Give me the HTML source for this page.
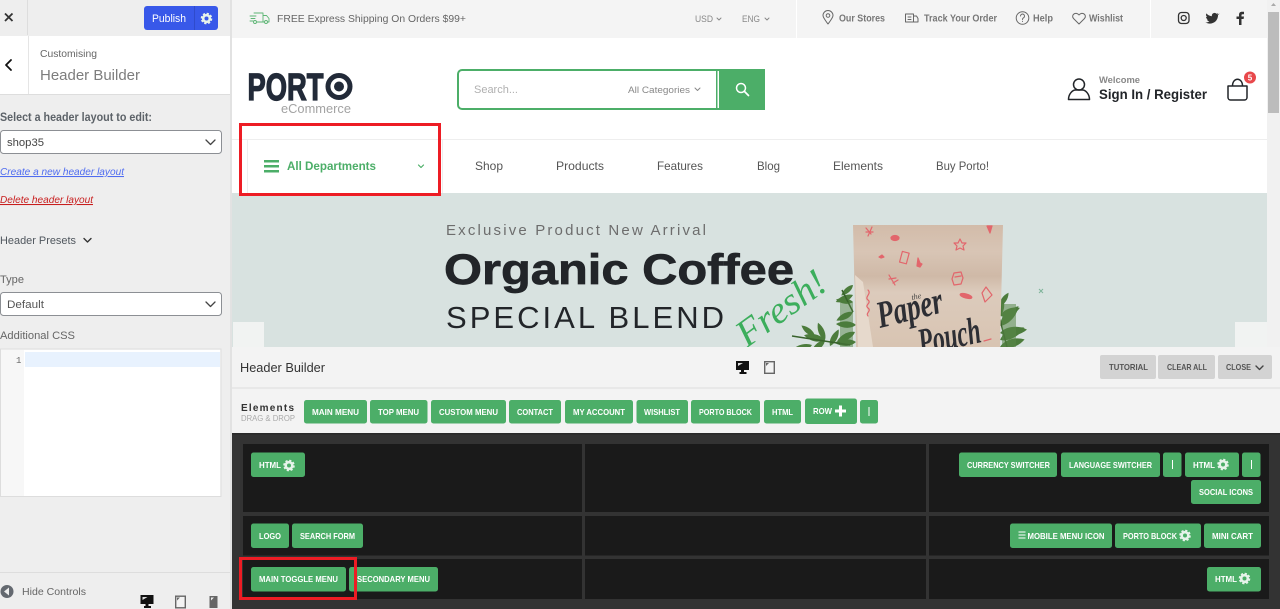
<!DOCTYPE html>
<html lang="en">
<head>
<meta charset="utf-8">
<title>Header Builder</title>
<style>
html,body{margin:0;padding:0;width:1280px;height:609px;overflow:hidden;background:#fff}
svg{display:block}
text{font-family:"Liberation Sans",sans-serif;white-space:pre}
.b{font-weight:700}
.bt{font-size:8.5px;font-weight:700;fill:#fff}
.gt{font-size:8.5px;font-weight:700;fill:#555}
.g{fill:#4cae68}
.nav{font-size:12px;fill:#555}
.top{font-size:10px;fill:#777;font-weight:700}
.ln{fill:none;stroke-linecap:round;stroke-linejoin:round}
</style>
</head>
<body>
<svg xmlns="http://www.w3.org/2000/svg" width="1280" height="609" viewBox="0 0 1280 609">
<defs>
<symbol id="gear" viewBox="-6 -6 12 12" overflow="visible">
<circle r="3.3" fill="none" stroke="#e6f3ea" stroke-width="2.6"/>
<circle r="4.9" fill="none" stroke="#e6f3ea" stroke-width="1.8" stroke-dasharray="2.2 1.65"/>
</symbol>
<symbol id="desk" viewBox="0 0 13 13">
<path d="M0 0h13v9H0z" fill="#111"/><path d="M2 2h5L2 5z" fill="#ddd"/><path d="M5 9h3v2h2.500v2h-7v-2H5z" fill="#111"/>
</symbol>
<symbol id="tab" viewBox="0 0 11 13">
<rect x=".7" y=".7" width="9.600" height="11.600" fill="#f3f3f3" stroke="#666" stroke-width="1.400"/><path d="M2 2h3L2 5z" fill="#666"/>
</symbol>
<linearGradient id="bag" x1="0" y1="0" x2="0" y2="1">
<stop offset="0" stop-color="#d2bba9"/><stop offset=".22" stop-color="#d8c5b5"/><stop offset=".42" stop-color="#cfb9a7"/><stop offset=".55" stop-color="#dccbbc"/><stop offset="1" stop-color="#d8c4b2"/>
</linearGradient>
<path id="leaf" d="M0 0C3-4 9-5 14-3 10 1 4 2 0 0z"/>
</defs>

<!-- left sidebar -->
<rect width="232" height="609" fill="#eee"/>
<rect x="230" width="2" height="609" fill="#e2e2e2"/>
<rect x="27" width="1" height="35" fill="#ddd"/>
<path d="M5 13.500l7.500 7.500M12.500 13.500L5 21" stroke="#333" stroke-width="1.800" fill="none"/>
<rect x="144" y="6" width="74" height="24" rx="3" fill="#3858e9"/>
<rect x="194" y="6" width="1" height="24" fill="#2f4bcb"/>
<text x="152" y="22" font-size="11" fill="#fff" textLength="34" lengthAdjust="spacingAndGlyphs">Publish</text>
<use href="#gear" x="200.500" y="12.500" width="12" height="12"/>
<rect y="36" width="230" height="58" fill="#fff"/>
<rect y="94" width="230" height="1" fill="#ddd"/>
<rect x="28" y="36" width="1" height="58" fill="#e5e5e5"/>
<path d="M11 60l-5 5 5 5" class="ln" stroke="#111" stroke-width="1.800"/>
<text x="40" y="57" font-size="10.500" fill="#666" textLength="57" lengthAdjust="spacingAndGlyphs">Customising</text>
<text x="40" y="80" font-size="15" fill="#7d7d7d" textLength="100" lengthAdjust="spacingAndGlyphs">Header Builder</text>
<text x="0" y="121" font-size="11.500" font-weight="700" fill="#5c6268" textLength="152" lengthAdjust="spacingAndGlyphs">Select a header layout to edit:</text>
<rect x=".5" y="130.500" width="221" height="23" rx="3" fill="#fff" stroke="#8c8f94"/>
<text x="7" y="146" font-size="11" fill="#444" textLength="37" lengthAdjust="spacingAndGlyphs">shop35</text>
<path d="M206 140l4.500 4.500 4.500-4.500" class="ln" stroke="#444" stroke-width="1.300"/>
<text x="0" y="175" font-size="10.500" font-style="italic" fill="#4f6cf0" text-decoration="underline" textLength="124" lengthAdjust="spacingAndGlyphs">Create a new header layout</text>
<text x="0" y="203" font-size="10.500" font-style="italic" fill="#c81e1e" text-decoration="underline" textLength="93" lengthAdjust="spacingAndGlyphs">Delete header layout</text>
<text x="0" y="244" font-size="11" fill="#50575e" textLength="76" lengthAdjust="spacingAndGlyphs">Header Presets</text>
<path d="M84 238.500l3.500 3.500 3.500-3.500" class="ln" stroke="#333" stroke-width="1.400"/>
<text x="0" y="283" font-size="11" fill="#666" textLength="24" lengthAdjust="spacingAndGlyphs">Type</text>
<rect x=".5" y="292.500" width="221" height="23" rx="3" fill="#fff" stroke="#8c8f94"/>
<text x="7" y="308" font-size="11" fill="#555" textLength="37" lengthAdjust="spacingAndGlyphs">Default</text>
<path d="M206 302l4.500 4.500 4.500-4.500" class="ln" stroke="#444" stroke-width="1.300"/>
<text x="0" y="339" font-size="11" fill="#666" textLength="75" lengthAdjust="spacingAndGlyphs">Additional CSS</text>
<rect x=".5" y="349" width="220.500" height="147.500" fill="#f7f7f7" stroke="#ddd"/>
<rect x="24" y="350" width="196" height="146" fill="#fff"/>
<rect x="25" y="352" width="195" height="15" fill="#e8f2fe"/>
<text x="16" y="363" font-size="9" fill="#666" style="font-family:'Liberation Mono',monospace">1</text>
<rect y="572" width="230" height="1" fill="#ddd"/>
<circle cx="7" cy="591.500" r="6.500" fill="#646970"/>
<path d="M9 587.500v8l-5-4z" fill="#eee"/>
<text x="22" y="595" font-size="10.500" fill="#666" textLength="64" lengthAdjust="spacingAndGlyphs">Hide Controls</text>
<use href="#desk" x="140.500" y="595" width="13" height="13"/>
<use href="#tab" x="175" y="595.500" width="11" height="13"/>
<rect x="209.500" y="596" width="8" height="12" fill="#666"/><path d="M211 597.500h3l-3 3z" fill="#eee"/>

<!-- top bar -->
<rect x="232" width="1035" height="38" fill="#f4f4f4"/>
<rect x="796" width="1" height="38" fill="#fff"/>
<rect x="1150" width="1" height="38" fill="#fff"/>
<rect x="1267" width="13" height="609" fill="#f1f1f1"/>
<rect x="1268" y="12" width="11" height="101" fill="#bcbcbc"/>
<path d="M1271 6l2.500-3 2.500 3z" fill="#aaa"/>

<g class="ln" stroke="#5cb574" stroke-width=".9">
<path d="M254 13h9v9h-6M263 15.500h3.500l2.500 3v3.500h-1.500M263 22h1"/>
<path d="M250 16h6M251 18.500h4M250 21h3"/>
<circle cx="255" cy="22" r="1.500"/><circle cx="266" cy="22" r="1.500"/>
</g>
<text x="277" y="22" font-size="10.500" fill="#666" textLength="189" lengthAdjust="spacingAndGlyphs">FREE Express Shipping On Orders $99+</text>
<text x="695" y="22" font-size="9" fill="#888" textLength="18" lengthAdjust="spacingAndGlyphs">USD</text>
<path d="M717 18l2 2 2-2" class="ln" stroke="#888"/>
<text x="742" y="22" font-size="9" fill="#888" textLength="18" lengthAdjust="spacingAndGlyphs">ENG</text>
<path d="M765 18l2 2 2-2" class="ln" stroke="#888"/>

<g class="ln" stroke="#666" stroke-width="1">
<path d="M828 24c-3-4-5-6.500-5-8.500a5 5 0 0 1 10 0c0 2-2 4.500-5 8.500z"/><circle cx="828" cy="15.500" r="1.800"/>
<path d="M905.500 14h8v8h-8zM913.500 16h3l1.500 2.500V22h-4.500"/><path d="M908 17h3M908 19.500h3"/>
<circle cx="1022.500" cy="18" r="6.300"/>
<path d="M1020.500 16a2 2 0 1 1 3 1.800c-.8.500-1 .9-1 1.700M1022.500 21.300v.2"/>
<path d="M1079 24l-5.500-5.500c-3-3.500 2.500-7.500 5.500-3.500 3-4 8.500 0 5.500 3.500z"/>
</g>
<text x="839" y="21.500" class="top" textLength="46" lengthAdjust="spacingAndGlyphs">Our Stores</text>
<text x="924" y="21.500" class="top" textLength="73" lengthAdjust="spacingAndGlyphs">Track Your Order</text>
<text x="1033" y="21.500" class="top" textLength="20" lengthAdjust="spacingAndGlyphs">Help</text>
<text x="1089" y="21.500" class="top" textLength="34" lengthAdjust="spacingAndGlyphs">Wishlist</text>

<g class="ln" stroke="#333" stroke-width="1.300">
<rect x="1178.500" y="12.500" width="10.500" height="11" rx="3"/><circle cx="1183.700" cy="18" r="2.500"/>
</g>
<path d="M1218.500 14c-.5.300-1 .4-1.500.5.500-.3 1-.8 1.200-1.400-.5.300-1 .5-1.700.7a2.700 2.700 0 0 0-4.600 2.400c-2.200-.1-4.200-1.200-5.500-2.800-.7 1.200-.4 2.800.8 3.600-.4 0-.8-.1-1.200-.3 0 1.300.9 2.400 2.100 2.700-.4.100-.8.100-1.200 0 .3 1.100 1.300 1.800 2.500 1.900-1.100.9-2.500 1.300-4 1.100 4.500 2.800 12.500 1 12.700-7.600.5-.2 1-.6 1.400-1.300z" fill="#333"/>
<path d="M1239 25v-6h-2.500v-2.500h2.500v-1.700c0-2 1.200-3 3-3h2v2.400h-1.400c-.9 0-1.100.4-1.100 1v1.300h2.500l-.4 2.500h-2.100v6z" fill="#333"/>

<!-- logo -->
<text x="247.500" y="100" font-size="38" font-weight="700" fill="#222a38" stroke="#222a38" stroke-width="1.300" textLength="76" lengthAdjust="spacingAndGlyphs">PORT</text>
<circle cx="339" cy="86.500" r="11" fill="#fff" stroke="#222a38" stroke-width="5"/>
<circle cx="339" cy="86.500" r="5" fill="#222a38"/>
<text x="281" y="113" font-size="12.500" fill="#a3a3a3" textLength="70" lengthAdjust="spacingAndGlyphs">eCommerce</text>

<!-- search -->
<rect x="458" y="70" width="306" height="39" rx="4" fill="#fff" stroke="#4cae68" stroke-width="2"/>
<rect x="716" y="70" width="1.500" height="39" fill="#4cae68"/>
<rect x="719" y="69" width="46" height="41" fill="#4cae68"/>
<text x="474" y="93" font-size="11" fill="#b0b0b0" textLength="44" lengthAdjust="spacingAndGlyphs">Search...</text>
<text x="628" y="93" font-size="9.500" fill="#888" textLength="62" lengthAdjust="spacingAndGlyphs">All Categories</text>
<path d="M695 88l2.500 2.500 2.500-2.500" class="ln" stroke="#888"/>
<circle cx="741" cy="88" r="4.500" fill="none" stroke="#fff" stroke-width="1.500"/>
<path d="M744.500 91.500l4 4" stroke="#fff" stroke-width="1.700" stroke-linecap="round"/>

<!-- account -->
<g class="ln" stroke="#222529" stroke-width="1.500">
<circle cx="1079" cy="84.500" r="5.500"/>
<path d="M1068.500 99.500c0-5.500 4-9.500 7-9.500h7c3 0 7 4 7 9.500z"/>
<path d="M1228 86h19v11.500a2.500 2.500 0 0 1-2.500 2.500h-14a2.500 2.500 0 0 1-2.500-2.500zM1232.500 86c0-9 10-9 10 0"/>
</g>
<text x="1099" y="83" font-size="9" fill="#888" font-weight="700" textLength="41" lengthAdjust="spacingAndGlyphs">Welcome</text>
<text x="1099" y="99" font-size="14" font-weight="700" fill="#222529" textLength="108" lengthAdjust="spacingAndGlyphs">Sign In / Register</text>
<circle cx="1250" cy="77.500" r="6" fill="#e8484b"/>
<text x="1250" y="80.500" font-size="8" font-weight="700" fill="#fff" text-anchor="middle">5</text>

<!-- nav -->
<rect x="232" y="139" width="1035" height="1" fill="#eee"/>
<rect x="247" y="140" width="1" height="53" fill="#eee"/>
<rect x="442" y="140" width="1" height="53" fill="#eee"/>
<rect x="264" y="160" width="15" height="2.500" class="g"/><rect x="264" y="165" width="15" height="2.500" class="g"/><rect x="264" y="170" width="15" height="2.500" class="g"/>
<text x="287" y="170" font-size="12" font-weight="700" class="g" textLength="89" lengthAdjust="spacingAndGlyphs">All Departments</text>
<path d="M418.500 165l2.500 2.500 2.500-2.500" class="ln" stroke="#4cae68" stroke-width="1.200"/>
<text x="475" y="170" class="nav" textLength="28" lengthAdjust="spacingAndGlyphs">Shop</text>
<text x="556" y="170" class="nav" textLength="48" lengthAdjust="spacingAndGlyphs">Products</text>
<text x="657" y="170" class="nav" textLength="46" lengthAdjust="spacingAndGlyphs">Features</text>
<text x="757" y="170" class="nav" textLength="23" lengthAdjust="spacingAndGlyphs">Blog</text>
<text x="833" y="170" class="nav" textLength="50" lengthAdjust="spacingAndGlyphs">Elements</text>
<text x="936" y="170" class="nav" textLength="53" lengthAdjust="spacingAndGlyphs">Buy Porto!</text>

<!-- banner -->
<rect x="232" y="193" width="1035" height="154" fill="#d8e2e0"/>
<text x="446" y="235" font-size="15" fill="#6d6d6d" textLength="260" lengthAdjust="spacing">Exclusive Product New Arrival</text>
<text x="444" y="284" font-size="43" font-weight="700" fill="#222529" stroke="#222529" stroke-width=".7" textLength="350" lengthAdjust="spacingAndGlyphs">Organic Coffee</text>
<text x="446" y="328" font-size="31" fill="#222529" textLength="278" lengthAdjust="spacing">SPECIAL BLEND</text>

<!-- foliage -->
<g fill="#4c7c3c">
<use href="#leaf" transform="translate(853 285) rotate(150) scale(1.100)"/>
<use href="#leaf" transform="translate(853 295) rotate(170) scale(1.300)"/>
<use href="#leaf" transform="translate(853 302) rotate(200) scale(1.200)"/>
<use href="#leaf" transform="translate(853 312) rotate(165) scale(1.300)"/>
<use href="#leaf" transform="translate(856 325) rotate(195) scale(1.400)"/>
<use href="#leaf" transform="translate(855 332) rotate(165) scale(1.400)"/>
<use href="#leaf" transform="translate(856 342) rotate(190) scale(1.500)"/>
<use href="#leaf" transform="translate(825 340) rotate(150) scale(1.300)"/>
<use href="#leaf" transform="translate(825 340) rotate(205) scale(1.500)"/>
<use href="#leaf" transform="translate(815 336) rotate(230) scale(1.200)"/>
<use href="#leaf" transform="translate(825 340) rotate(260) scale(1.300)"/>
<use href="#leaf" transform="translate(812 345) rotate(175) scale(1.600)"/>
<use href="#leaf" transform="translate(830 346) rotate(310) scale(1.300)"/>
<use href="#leaf" transform="translate(1000 306) rotate(-45) scale(1.100)"/>
<use href="#leaf" transform="translate(1000 316) rotate(-70) scale(1.300)"/>
<use href="#leaf" transform="translate(1000 316) rotate(-10) scale(1.500)"/>
<use href="#leaf" transform="translate(1000 326) rotate(-35) scale(1.900)"/>
<use href="#leaf" transform="translate(1000 333) rotate(5) scale(1.900)"/>
<use href="#leaf" transform="translate(1000 340) rotate(-15) scale(1.900)"/>
<use href="#leaf" transform="translate(1000 347) rotate(-5) scale(1.800)"/>
</g>
<path d="M792 336l58 9M997 308l10 39M842 290l11 22" stroke="#38622c" stroke-width="1.500" fill="none"/>
<rect x="1002" y="304" width="14" height="43" fill="#5a8748" opacity=".55"/>
<rect x="840" y="302" width="13" height="45" fill="#4c7c3c" opacity=".45"/>

<!-- pouch -->
<path d="M853 225h150l-3 122H856z" fill="url(#bag)"/>
<path d="M863 282l10 65h-15l-3-72z" fill="#e6d9cc"/>
<g class="ln" stroke="#e2666c" stroke-width="1.200">
<path d="M866 228l5 6M872 227l-4 9M866 232h7"/>
<ellipse cx="895" cy="238" rx="4" ry="2.500" fill="#e2666c"/>
<path d="M879 257l3-2 2 2-3 1z" fill="#e2666c"/>
<rect x="901" y="252" width="7" height="11" transform="rotate(15 904 257)"/>
<path d="M918 258l2 5 2 1-2 3-3-1z" fill="#e2666c"/>
<path d="M960 239l2 4 4 0-3 3 1 4-4-2-4 2 1-4-3-3 4 0z"/>
<path d="M987 226h5l-2 7z" fill="#e2666c"/>
<path d="M889 275l6 10M889 279l7-1M893 283l5-3"/>
<path d="M954 273l7-1 2 6-2 6-7 1-2-6z"/><path d="M955 277l6-1"/>
<ellipse cx="966" cy="296" rx="6" ry="2" fill="#e2666c" transform="rotate(15 966 296)"/>
<path d="M986 287l6 8-7 7-3-9z"/>
<path d="M868 290c4 4-4 7 0 10s-4 5 0 8-3 5 0 8"/>
<path d="M984 341l7-2"/>
</g>
<text transform="translate(912 300) rotate(-12)" font-size="8" fill="#444" style="font-family:'Liberation Serif',serif;font-style:italic">the</text>
<text transform="translate(880 328) rotate(-14)" font-size="38" fill="#2d2e34" font-weight="700" textLength="67" lengthAdjust="spacingAndGlyphs" style="font-family:'Liberation Serif',serif;font-style:italic">Paper</text>
<text transform="translate(921 355) rotate(-12)" font-size="38" fill="#2d2e34" font-weight="700" textLength="63" lengthAdjust="spacingAndGlyphs" style="font-family:'Liberation Serif',serif;font-style:italic">Pouch</text>
<text transform="translate(747 348) rotate(-36)" font-size="38" fill="#3cae5c" textLength="102" lengthAdjust="spacingAndGlyphs" style="font-family:'Liberation Serif',serif;font-style:italic">Fresh!</text>
<path d="M1039 289l4 4M1043 289l-4 4" stroke="#7fb49a"/>
<rect x="233" y="322" width="31" height="25" fill="#f1f3f2"/>
<rect x="1235" y="322" width="32" height="25" fill="#f1f3f2"/>

<!-- builder -->
<rect x="232" y="347" width="1048" height="87" fill="#f3f3f3"/>
<rect x="232" y="387" width="1048" height="2" fill="#e8e8e8"/>
<text x="240" y="372" font-size="13" fill="#333" textLength="85" lengthAdjust="spacingAndGlyphs">Header Builder</text>
<use href="#desk" x="736" y="361" width="13" height="13"/>
<use href="#tab" x="764" y="361" width="11" height="13"/>
<rect x="1100" y="355" width="56" height="24" rx="2" fill="#d3d3d3"/>
<rect x="1158" y="355" width="57" height="24" rx="2" fill="#d3d3d3"/>
<rect x="1218" y="355" width="54" height="24" rx="2" fill="#d3d3d3"/>
<text x="1109" y="370" class="gt" textLength="39" lengthAdjust="spacingAndGlyphs">TUTORIAL</text>
<text x="1167" y="370" class="gt" textLength="40" lengthAdjust="spacingAndGlyphs">CLEAR ALL</text>
<text x="1226" y="370" class="gt" textLength="25" lengthAdjust="spacingAndGlyphs">CLOSE</text>
<path d="M1256 366l3.500 3.500 3.500-3.500" class="ln" stroke="#444" stroke-width="1.400"/>
<text x="241" y="411" font-size="10" font-weight="700" fill="#333" textLength="53" lengthAdjust="spacing">Elements</text>
<text x="241" y="421" font-size="8" fill="#aaa" textLength="54" lengthAdjust="spacingAndGlyphs">DRAG &amp; DROP</text>

<g class="g">
<rect x="304" y="400" width="63" height="23.500" rx="2.500"/>
<rect x="370" y="400" width="57.500" height="23.500" rx="2.500"/>
<rect x="431" y="400" width="75" height="23.500" rx="2.500"/>
<rect x="509" y="400" width="52" height="23.500" rx="2.500"/>
<rect x="565" y="400" width="68" height="23.500" rx="2.500"/>
<rect x="636.500" y="400" width="51.500" height="23.500" rx="2.500"/>
<rect x="691" y="400" width="69" height="23.500" rx="2.500"/>
<rect x="764" y="400" width="37" height="23.500" rx="2.500"/>
<rect x="805" y="398.500" width="52" height="25.500" rx="2.500"/>
<rect x="860" y="400" width="18" height="23.500" rx="2.500"/>
</g>
<g class="bt">
<text x="312" y="415" textLength="47" lengthAdjust="spacingAndGlyphs">MAIN MENU</text>
<text x="378" y="415" textLength="41" lengthAdjust="spacingAndGlyphs">TOP MENU</text>
<text x="439" y="415" textLength="59" lengthAdjust="spacingAndGlyphs">CUSTOM MENU</text>
<text x="517" y="415" textLength="36" lengthAdjust="spacingAndGlyphs">CONTACT</text>
<text x="573" y="415" textLength="52" lengthAdjust="spacingAndGlyphs">MY ACCOUNT</text>
<text x="644" y="415" textLength="36" lengthAdjust="spacingAndGlyphs">WISHLIST</text>
<text x="699" y="415" textLength="53" lengthAdjust="spacingAndGlyphs">PORTO BLOCK</text>
<text x="772" y="415" textLength="21" lengthAdjust="spacingAndGlyphs">HTML</text>
<text x="813" y="414" textLength="19" lengthAdjust="spacingAndGlyphs">ROW</text>
</g>
<path d="M835 411h11M840.500 405.500v11" stroke="#fff" stroke-width="3"/>
<rect x="868.500" y="407" width="1" height="9" fill="#fff"/>

<!-- dark area -->
<rect x="232" y="433" width="1048" height="176" fill="#333"/>
<rect x="232" y="433" width="1048" height="1.500" fill="#2a2a2a"/>
<g fill="#1a1a1a">
<rect x="243" y="444" width="339" height="68"/>
<rect x="585" y="444" width="341" height="68"/>
<rect x="929" y="444" width="340" height="68"/>
<rect x="243" y="516" width="339" height="39.500"/>
<rect x="585" y="516" width="341" height="39.500"/>
<rect x="929" y="516" width="340" height="39.500"/>
<rect x="243" y="559" width="339" height="40"/>
<rect x="585" y="559" width="341" height="40"/>
<rect x="929" y="559" width="340" height="40"/>
</g>
<g class="g">
<rect x="251" y="452.500" width="54" height="24.500" rx="2.500"/>
<rect x="251" y="523.500" width="38" height="24.500" rx="2.500"/>
<rect x="292" y="523.500" width="71" height="24.500" rx="2.500"/>
<rect x="251" y="567" width="95" height="24.500" rx="2.500"/>
<rect x="349" y="567" width="89" height="24.500" rx="2.500"/>
<rect x="959" y="452.500" width="98" height="24.500" rx="2.500"/>
<rect x="1061" y="452.500" width="99" height="24.500" rx="2.500"/>
<rect x="1163" y="452.500" width="18.500" height="24.500" rx="2.500"/>
<rect x="1185" y="452.500" width="54" height="24.500" rx="2.500"/>
<rect x="1242" y="452.500" width="18.500" height="24.500" rx="2.500"/>
<rect x="1191" y="480" width="70" height="24" rx="2.500"/>
<rect x="1010" y="523.500" width="102" height="24.500" rx="2.500"/>
<rect x="1115" y="523.500" width="86" height="24.500" rx="2.500"/>
<rect x="1204" y="523.500" width="57" height="24.500" rx="2.500"/>
<rect x="1207" y="567" width="54" height="24.500" rx="2.500"/>
</g>
<g class="bt">
<text x="259" y="468" textLength="22" lengthAdjust="spacingAndGlyphs">HTML</text>
<text x="259" y="539" textLength="22" lengthAdjust="spacingAndGlyphs">LOGO</text>
<text x="300" y="539" textLength="55" lengthAdjust="spacingAndGlyphs">SEARCH FORM</text>
<text x="259" y="582" textLength="79" lengthAdjust="spacingAndGlyphs">MAIN TOGGLE MENU</text>
<text x="357" y="582" textLength="73" lengthAdjust="spacingAndGlyphs">SECONDARY MENU</text>
<text x="967" y="468" textLength="83" lengthAdjust="spacingAndGlyphs">CURRENCY SWITCHER</text>
<text x="1069" y="468" textLength="83" lengthAdjust="spacingAndGlyphs">LANGUAGE SWITCHER</text>
<text x="1193" y="468" textLength="22" lengthAdjust="spacingAndGlyphs">HTML</text>
<text x="1199" y="495" textLength="54" lengthAdjust="spacingAndGlyphs">SOCIAL ICONS</text>
<text x="1027.500" y="539" textLength="77" lengthAdjust="spacingAndGlyphs">MOBILE MENU ICON</text>
<text x="1123" y="539" textLength="54" lengthAdjust="spacingAndGlyphs">PORTO BLOCK</text>
<text x="1212" y="539" textLength="41" lengthAdjust="spacingAndGlyphs">MINI CART</text>
<text x="1215" y="582" textLength="22" lengthAdjust="spacingAndGlyphs">HTML</text>
</g>
<rect x="1172" y="460" width="1" height="9" fill="#fff"/>
<rect x="1251" y="460" width="1" height="9" fill="#fff"/>
<path d="M1018.500 532h7M1018.500 535h7M1018.500 538h7" stroke="#fff" stroke-width=".9"/>
<use href="#gear" x="283" y="459.500" width="12" height="12"/>
<use href="#gear" x="1217" y="458.500" width="12" height="12"/>
<use href="#gear" x="1179" y="529.500" width="12" height="12"/>
<use href="#gear" x="1238.500" y="572.500" width="12" height="12"/>

<!-- red annotation boxes -->
<rect x="240.500" y="124.500" width="199" height="70" fill="none" stroke="#ed1c24" stroke-width="3"/>
<rect x="240.500" y="558.500" width="115" height="40" fill="none" stroke="#ed1c24" stroke-width="3"/>
</svg>
</body>
</html>
